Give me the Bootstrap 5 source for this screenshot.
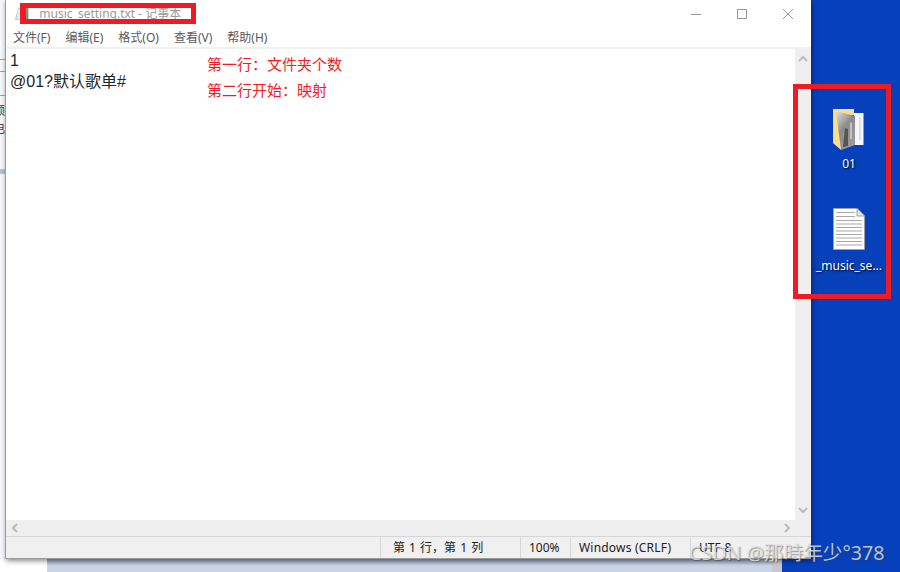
<!DOCTYPE html>
<html lang="zh-CN">
<head>
<meta charset="UTF-8" />
<title>music setting.txt - 记事本</title>
<link href="https://cdn.jsdelivr.net/npm/bootstrap@5.3.0/dist/css/bootstrap.min.css" rel="stylesheet" />
<style>
  html, body { height: 572px; overflow: hidden; }
  body {
    background: #0640bb;
    font-family: "Noto Sans", "Noto Sans CJK SC", sans-serif;
  }
  .screen { width: 900px; height: 572px; position: relative; }
  .top-area { height: 559px; }
  .back-strip { width: 5px; background: #f6f8fb; color: #444; font-size: 12px; line-height: 16px; overflow: hidden; }
  .strip-line { height: 1px; background: #9ba3ad; }
  .strip-glyph { width: 5px; white-space: nowrap; }
  .strip-band { height: 5px; background: #b4c2d6; }
  .bottom-area { height: 13px; }
  .bottom-blank { width: 47px; background: #fff; }
  .bottom-band { width: 725px; background: linear-gradient(#93a2bd, #c9d5e6 50%); }
  .bottom-gray { width: 10px; background: #c9c9c9; }
  .note-win {
    width: 806px; height: 559px; background: #fff;
    border-left: 1px solid #9c9c9c; border-bottom: 1px solid #9c9c9c;
    box-shadow: 1px 2px 5px rgba(0,0,0,.45); position: relative;
  }
  .win-title { height: 28px; color: #9a9a9a; font-size: 12px; padding-left: 9px; }
  .win-btn { width: 46px; line-height: 0; }
  .menu-row { height: 19px; font-size: 12px; color: #5a5a5a; gap: 15px; padding-left: 7px; }
  .text-pane { border-top: 2px solid #f0f0f0; min-height: 0; }
  .text-body { font-family: "Liberation Sans", "Noto Sans CJK SC", sans-serif; font-size: 16px; line-height: 21px; padding: 1px 4px; color: #111; }
  .side-bar { width: 16px; background: #efefef; padding: 6px 0; }
  .hscroll { height: 16px; background: #efefef; padding: 0 20px 0 5px; }
  .status-row { height: 22px; background: #f0f0f0; border-top: 1px solid #d7d7d7; font-size: 12px; color: #222; }
  .status-cell { border-left: 1px solid #d7d7d7; padding-left: 8px; line-height: 21px; white-space: nowrap; }
  .status-pos { width: 140px; padding-left: 12px; word-spacing: 1px; }
  .status-zoom { width: 50px; }
  .status-eol { width: 120px; letter-spacing: .2px; }
  .status-spacer { width: 374px; }
  .red-note { position: absolute; left: 207px; color: #f01c24; font-size: 15px; line-height: 20px; }
  .red-box { position: absolute; border: 5px solid #ed1c24; pointer-events: none; }
  .desk-icon {
    position: absolute; width: 80px; color: #fff; font-size: 12px; text-align: center;
    text-shadow: 1px 1px 2px #000; display: flex; flex-direction: column; align-items: center;
  }
  .mark-text {
    position: absolute; left: 689px; top: 538px; font-size: 19.6px; color: rgba(225,225,225,.82);
    text-shadow: 1px 1px 1px rgba(60,60,60,.5); white-space: nowrap;
  }
</style>
</head>
<body>
<div class="screen">
  <div class="top-area d-flex">
    <div class="back-strip d-flex flex-column">
      <div class="strip-line" style="margin-top:59px"></div>
      <div class="strip-line" style="margin-top:11px"></div>
      <div class="strip-line" style="margin-top:23px"></div>
      <div class="strip-glyph d-flex justify-content-end" style="margin-top:7px">额</div>
      <div class="strip-glyph d-flex justify-content-end" style="margin-top:2px">电</div>
      <div class="strip-band" style="margin-top:32px"></div>
    </div>
    <div class="note-win d-flex flex-column">
      <div class="win-title d-flex align-items-center justify-content-between flex-shrink-0">
        <div class="d-flex align-items-center">
          <svg width="15" height="14" class="me-1"><path d="M0 12L3 1h3v12H0z" fill="#bcd6e6"/><path d="M3 3l2-1v10H2z" fill="#e4eff6"/><rect x="11" y="1" width="3" height="12" fill="#8a8a8a"/><rect x="13" y="1" width="1" height="12" fill="#ccc"/></svg>
          <span>_music_setting.txt - 记事本</span>
        </div>
        <div class="d-flex">
          <div class="win-btn text-center"><svg width="12" height="12"><path d="M1 6.5h10" stroke="#999"/></svg></div>
          <div class="win-btn text-center"><svg width="12" height="12"><rect x="1.5" y="1.5" width="9" height="9" fill="none" stroke="#999"/></svg></div>
          <div class="win-btn text-center"><svg width="12" height="12"><path d="M1 1l10 10M11 1L1 11" stroke="#999"/></svg></div>
        </div>
      </div>
      <div class="menu-row d-flex align-items-center flex-shrink-0">
        <span>文件(F)</span><span>编辑(E)</span><span>格式(O)</span><span>查看(V)</span><span>帮助(H)</span>
      </div>
      <div class="text-pane d-flex flex-grow-1">
        <div class="text-body flex-grow-1">1<br />@01?默认歌单#</div>
        <div class="side-bar d-flex flex-column justify-content-between align-items-center">
          <svg width="10" height="7"><path d="M1 6l4-4 4 4" fill="none" stroke="#bbb" stroke-width="2"/></svg>
          <svg width="10" height="7"><path d="M1 1l4 4 4-4" fill="none" stroke="#bbb" stroke-width="2"/></svg>
        </div>
      </div>
      <div class="hscroll d-flex align-items-center justify-content-between flex-shrink-0">
        <svg width="7" height="10"><path d="M6 1L2 5l4 4" fill="none" stroke="#bbb" stroke-width="2"/></svg>
        <svg width="7" height="10"><path d="M1 1l4 4-4 4" fill="none" stroke="#bbb" stroke-width="2"/></svg>
      </div>
      <div class="status-row d-flex flex-shrink-0">
        <div class="status-spacer"></div>
        <div class="status-cell status-pos">第 1 行，第 1 列</div>
        <div class="status-cell status-zoom">100%</div>
        <div class="status-cell status-eol">Windows (CRLF)</div>
        <div class="status-cell flex-grow-1">UTF-8</div>
      </div>
    </div>
  </div>
  <div class="bottom-area d-flex">
    <div class="bottom-blank"></div>
    <div class="bottom-band"></div>
    <div class="bottom-gray"></div>
  </div>
  <div class="red-note" style="top:54px">第一行：文件夹个数</div>
  <div class="red-note" style="top:80px">第二行开始：映射</div>
  <div class="red-box" style="left:20px;top:3px;width:176px;height:21px;border-left-width:6px"></div>
  <div class="red-box" style="left:793px;top:84px;width:98px;height:215px"></div>
  <div class="desk-icon" style="left:809px;top:108px">
    <svg width="32" height="43" viewBox="0 0 32 43">
      <defs><linearGradient id="photoShade" x1="0" x2=".6" y1="0" y2="1"><stop offset="0" stop-color="#e2e2e2"/><stop offset=".5" stop-color="#8c8c8c"/><stop offset="1" stop-color="#9a9a9a"/></linearGradient></defs>
      <path d="M0 1H21V7H10L8 42L0 35Z" fill="#fbdc8c"/>
      <path d="M21 5H30.5V37H21Z" fill="#f4f6fb"/>
      <path d="M26 9H28V32H26Z" fill="#d5dff0"/>
      <path d="M3 3L22 8V37L8 42Z" fill="url(#photoShade)"/>
      <path d="M12 20L15 21V38L10 39Z" fill="#555"/>
      <path d="M17 14L19 15V31L17 31Z" fill="#c2c2c2"/>
    </svg>
    <span style="margin-top:5px;line-height:16px">01</span>
  </div>
  <div class="desk-icon" style="left:809px;top:208px">
    <svg width="32" height="42" viewBox="0 0 32 42">
      <path d="M.5.5H24L31.5 8V41.5H.5Z" fill="#fff" stroke="#a0a0a0"/>
      <path d="M24 .5V8H31.5" fill="#e3e3e3" stroke="#a0a0a0"/>
      <path d="M3 4.5H22M3 8.5H22M3 12.5H29M3 16H29M3 19.5H29M3 23H29M3 26.5H29M3 30H29M3 33.5H29M3 37H29" stroke="#a9a9a9"/>
    </svg>
    <span style="margin-top:8px;line-height:16px">_music_se...</span>
  </div>
  <div class="mark-text">CSDN @那時年少°378</div>
</div>
</body>
</html>
